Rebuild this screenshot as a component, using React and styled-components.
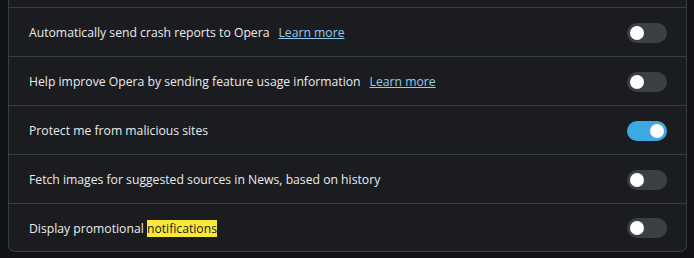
import React from "react";
import styled, { createGlobalStyle } from "styled-components";

const GlobalStyle = createGlobalStyle`
  html, body {
    margin: 0;
    padding: 0;
    background: #111215;
  }
  body {
    font-family: "Open Sans", "Noto Sans", sans-serif;
  }
`;

const Page = styled.div`
  width: 694px;
  height: 258px;
  box-sizing: border-box;
  padding: 0 7px 0 8px;
  overflow: hidden;
`;

const Card = styled.div`
  background: #1b1c20;
  border: 1px solid #3a3d44;
  border-top: none;
  border-radius: 0 0 7px 7px;
`;

const Tail = styled.div`
  height: 7px;
`;

const Row = styled.div`
  display: flex;
  align-items: center;
  justify-content: space-between;
  height: 49px;
  box-sizing: border-box;
  border-top: 1px solid #3a3d44;
  padding: 1px 19px 0 20px;

  &:last-child {
    height: 48px;
  }
`;

const Label = styled.span`
  font-size: 12.2px;
  color: #eaebed;
`;

const Link = styled.a`
  margin-left: 9px;
  color: #8fcbf2;
  text-decoration: underline;
  cursor: pointer;
`;

const Mark = styled.mark`
  background: #fbe93a;
  color: #1b1c20;
  padding: 0;
`;

const Track = styled.div`
  width: 40px;
  height: 20px;
  border-radius: 10px;
  background: ${p => (p.$on ? "#3ea8e2" : "#3c3f43")};
  display: flex;
  align-items: center;
  justify-content: ${p => (p.$on ? "flex-end" : "flex-start")};
  padding: 0 3px;
  box-sizing: border-box;
`;

const Knob = styled.div`
  width: 14px;
  height: 14px;
  border-radius: 50%;
  background: #ffffff;
`;

const Toggle = ({ on }) => (
  <Track $on={on}>
    <Knob />
  </Track>
);

const rows = [
  { text: "Automatically send crash reports to Opera", link: true, on: false },
  { text: "Help improve Opera by sending feature usage information", link: true, on: false },
  { text: "Protect me from malicious sites", on: true },
  { text: "Fetch images for suggested sources in News, based on history", on: false },
];

export default function App() {
  return (
    <Page>
      <GlobalStyle />
      <Card>
        <Tail />
        {rows.map(r => (
          <Row key={r.text}>
            <Label>
              {r.text}
              {r.link && <Link>Learn more</Link>}
            </Label>
            <Toggle on={r.on} />
          </Row>
        ))}
        <Row>
          <Label>
            Display promotional <Mark>notifications</Mark>
          </Label>
          <Toggle on={false} />
        </Row>
      </Card>
    </Page>
  );
}
